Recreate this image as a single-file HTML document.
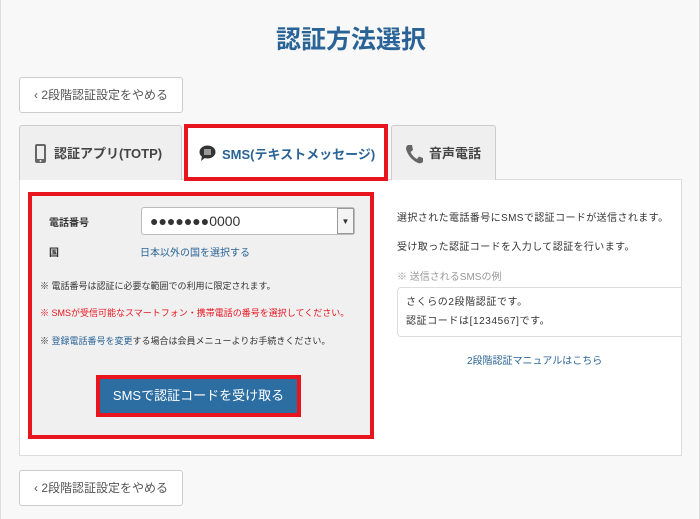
<!DOCTYPE html>
<html><head><meta charset="utf-8"><style>
*{box-sizing:border-box;margin:0;padding:0}
body{width:700px;height:519px;background:#f8f8f8;font-family:"Liberation Sans","Noto Sans CJK JP",sans-serif;position:relative;overflow:hidden;color:#333;border-left:1px solid #ddd;border-right:1px solid #ddd}
.a{position:absolute}
h1{position:absolute;left:0;width:700px;top:20px;text-align:center;font-size:25px;color:#2a6496;font-weight:bold}
.btn{position:absolute;left:18px;width:164px;height:36px;background:#fff;border:1px solid #ccc;border-radius:3px;font-size:12px;color:#555;line-height:34px;text-align:center}
.tab{position:absolute;top:125px;height:55px;background:#efefef;border:1px solid #ccc;border-bottom:none;border-radius:3px 3px 0 0;font-size:13px;font-weight:bold;color:#444;line-height:55px}
.panel{position:absolute;left:18px;top:179px;width:663px;height:277px;background:#fff;border:1px solid #ddd}
.box{position:absolute;left:27px;top:192px;width:346px;height:247px;border:4px solid #e8141e;background:#f0f0f0}
.s{font-size:10px}
a{color:#2a6496;text-decoration:none}
</style></head><body>
<h1>認証方法選択</h1>
<div class="btn" style="top:77px">‹ 2段階認証設定をやめる</div>
<div class="panel"></div>
<div class="tab" style="left:18px;width:163px;padding-left:14px">
<svg class="a" style="left:14px;top:17px" width="13" height="21" viewBox="0 0 13 21"><rect x="1" y="1" width="11" height="19" rx="2" fill="#666"/><rect x="3" y="3" width="7" height="13" fill="#eee"/><circle cx="6.5" cy="18" r="1" fill="#eee"/></svg>
<span style="margin-left:20px">認証アプリ(TOTP)</span></div>
<div class="a" style="left:183px;top:124px;width:204px;height:57px;background:#fff;border:4px solid #e8141e"></div>
<svg class="a" style="left:198px;top:145px" width="17" height="16" viewBox="0 0 17 16"><ellipse cx="8.5" cy="7" rx="8" ry="6.5" fill="#333"/><path d="M3 11 L2 16 L7 12Z" fill="#333"/><path d="M5 5h7M5 7h7M5 9h7" stroke="#fff" stroke-width="1"/></svg>
<div class="a" style="left:221px;top:144px;font-size:13px;font-weight:bold;color:#2a6496">SMS(テキストメッセージ)</div>
<div class="tab" style="left:390px;width:105px">
<svg class="a" style="left:13px;top:18px" width="19" height="20" viewBox="0 0 19 20"><path d="M3 1 L7 1 L8 6 L5.5 8 Q8 13 12 15 L14 12.5 L18 14 L18 18 Q16 20 13 19 Q4 15 1 5 Q1 2 3 1Z" fill="#666"/></svg>
<span style="margin-left:37px">音声電話</span></div>
<div class="box"></div>
<div class="a s" style="left:48px;top:214px;font-weight:bold">電話番号</div>
<div class="a" style="left:140px;top:207px;width:214px;height:28px;background:#fff;border:1px solid #bbb;border-radius:3px;font-size:14px;line-height:26px;padding-left:8px;color:#333">●●●●●●●0000<div class="a" style="right:0;top:0;width:17px;height:26px;border:1px solid #999;background:#f4f4f4;font-size:8px;text-align:center">▼</div></div>
<div class="a s" style="left:48px;top:244px;font-weight:bold">国</div>
<div class="a s" style="left:139px;top:244px"><a>日本以外の国を選択する</a></div>
<div class="a" style="left:39px;top:279px;font-size:9px">※ 電話番号は認証に必要な範囲での利用に限定されます。</div>
<div class="a" style="left:39px;top:306px;font-size:9px;color:#e8141e">※ SMSが受信可能なスマートフォン・携帯電話の番号を選択してください。</div>
<div class="a" style="left:39px;top:334px;font-size:9px">※ <a>登録電話番号を変更</a>する場合は会員メニューよりお手続きください。</div>
<div class="a" style="left:95px;top:375px;width:205px;height:42px;border:4px solid #e8141e;background:#2c6ea2;color:#fff;font-size:13px;text-align:center;line-height:34px">SMSで認証コードを受け取る</div>
<div class="a s" style="left:396px;top:209px;letter-spacing:0.4px">選択された電話番号にSMSで認証コードが送信されます。</div>
<div class="a s" style="left:396px;top:238px;letter-spacing:0.4px">受け取った認証コードを入力して認証を行います。</div>
<div class="a s" style="left:396px;top:268px;color:#999">※ 送信されるSMSの例</div>
<div class="a" style="left:396px;top:287px;width:284px;height:50px;border:1px solid #ddd;border-right:none;border-radius:4px 0 0 4px;background:#fff;font-size:10px;padding:5px 0 0 8px;line-height:19px;letter-spacing:0.6px">さくらの2段階認証です。<br>認証コードは[1234567]です。</div>
<div class="a s" style="left:466px;top:352px"><a>2段階認証マニュアルはこちら</a></div>
<div class="btn" style="top:470px">‹ 2段階認証設定をやめる</div>
</body></html>
